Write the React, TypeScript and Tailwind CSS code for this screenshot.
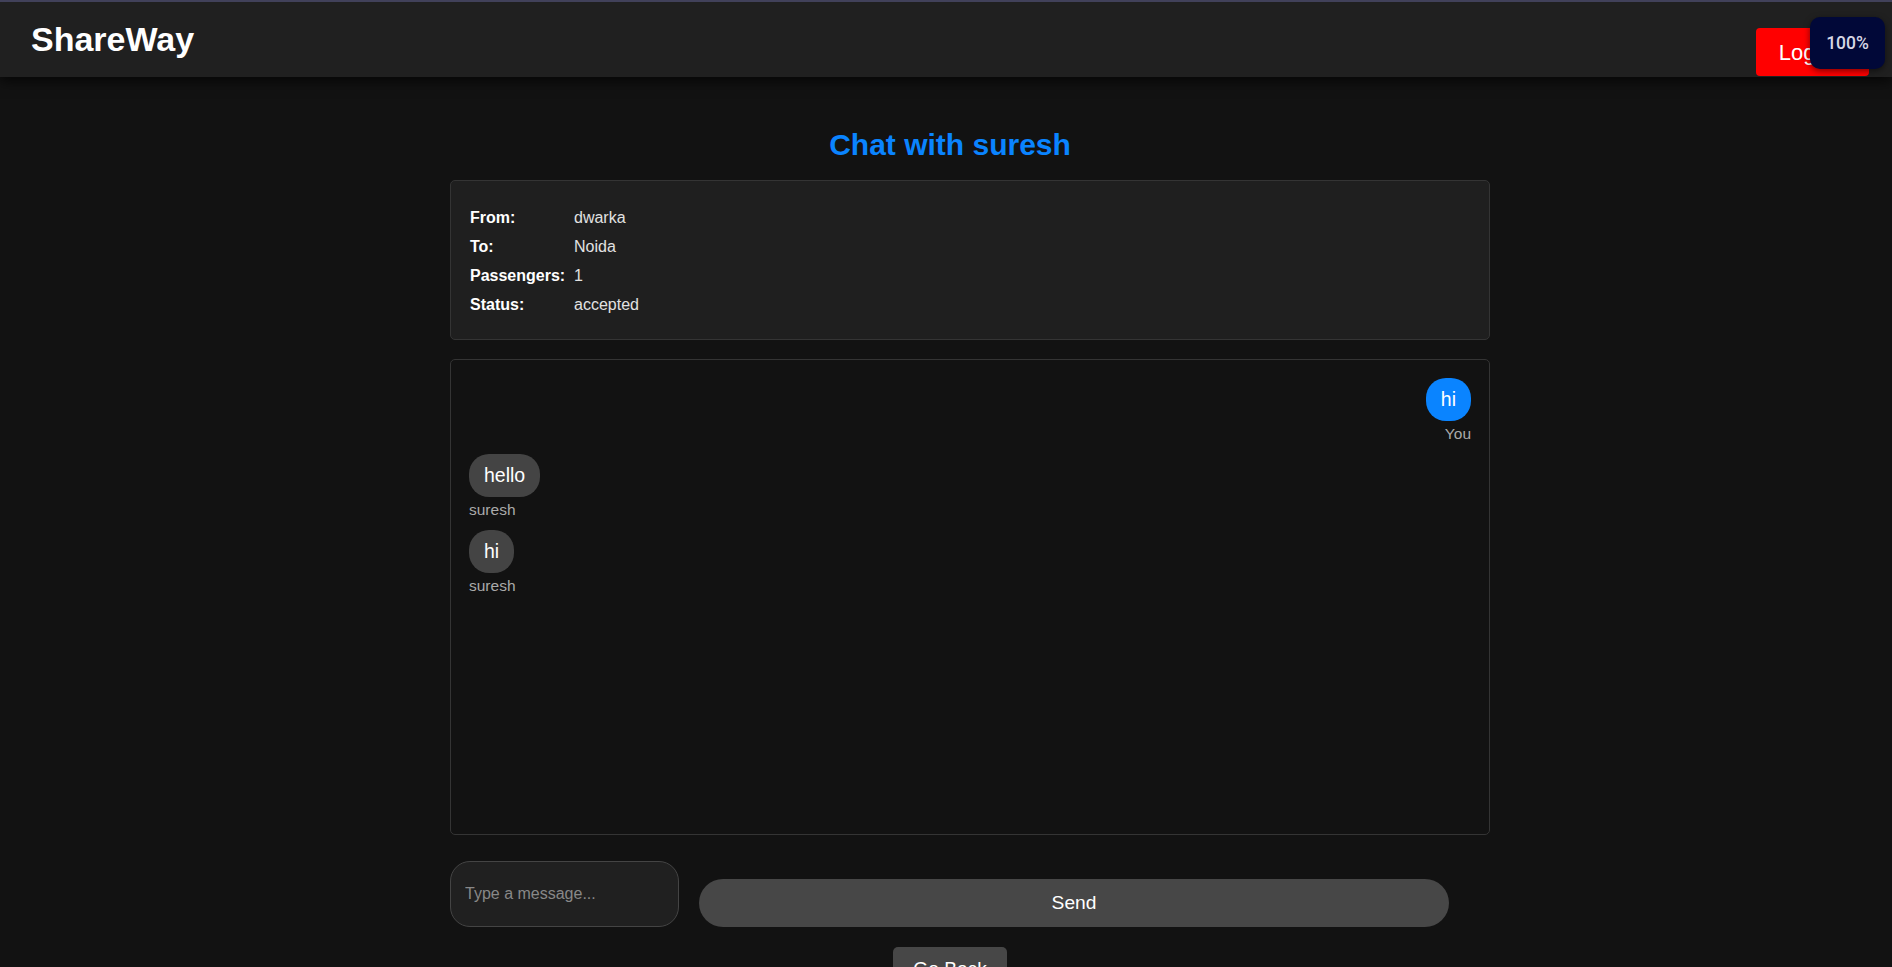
import React from "react";

const messages = [
  { text: "hi", sender: "You", mine: true },
  { text: "hello", sender: "suresh", mine: false },
  { text: "hi", sender: "suresh", mine: false },
];

const details = [
  { label: "From:", value: "dwarka" },
  { label: "To:", value: "Noida" },
  { label: "Passengers:", value: "1" },
  { label: "Status:", value: "accepted" },
];

function Header() {
  return (
    <div className="relative h-[77px] flex justify-between items-start bg-[#202020] border-t-2 border-[#41415a] shadow-[0_4px_12px_rgba(0,0,0,0.7)] z-10">
      <div className="pl-[31px] pt-[18px] text-[34px] leading-[38px] font-bold text-white">
        ShareWay
      </div>
      <button className="mt-[26px] mr-[23px] h-[48px] px-[23px] rounded-[4px] bg-[#ff0000] text-white text-[22px]">
        Logout
      </button>
      <div className="absolute right-[7px] top-[15px] w-[75px] h-[52px] rounded-[10px] bg-[#010838] shadow-[0_2px_6px_rgba(0,0,0,0.5)] flex items-center justify-center text-[17.5px] text-[#d6d6e4] font-medium font-['Roboto',sans-serif]">
        100%
      </div>
    </div>
  );
}

function App() {
  return (
    <div className="min-h-screen bg-[#121212] font-['Liberation_Sans',Arial,sans-serif] text-white overflow-hidden">
      <Header />

      <div className="w-[1008px] mx-auto pl-[8px] flex flex-col">
        <h2 className="mt-[51px] text-center text-[30px] leading-[33px] font-bold text-[#0a84ff]">
          Chat with suresh
        </h2>

        <div className="mt-[19px] w-[1040px] border border-[#343434] rounded-[5px] bg-[#1f1f1f] pl-[19px] pt-[22px] pb-[20px]">
          {details.map((d) => (
            <div key={d.label} className="grid grid-cols-[104px_1fr] h-[29px] items-center text-[16px]">
              <span className="font-bold text-white">{d.label}</span>
              <span className="text-[#e2e2e2]">{d.value}</span>
            </div>
          ))}
        </div>

        <div className="mt-[19px] w-[1040px] h-[476px] border border-[#343434] rounded-[5px] bg-[#121212] p-[18px] flex flex-col gap-[12px]">
          {messages.map((m, i) => (
            <div key={i} className={m.mine ? "flex flex-col items-end" : "flex flex-col items-start"}>
              <div
                className={
                  m.mine
                    ? "px-[15px] py-[10px] rounded-[20px] bg-[#0a84ff] text-white text-[19.5px] leading-[23px]"
                    : "px-[15px] py-[10px] rounded-[20px] bg-[#444444] text-white text-[19.5px] leading-[23px]"
                }
              >
                {m.text}
              </div>
              <div className="mt-[4px] text-[15.5px] leading-[17px] text-[#aaaaaa]">{m.sender}</div>
            </div>
          ))}
        </div>

        <div className="mt-[26px] flex items-end gap-[20px]">
          <input
            type="text"
            placeholder="Type a message..."
            className="w-[229px] h-[66px] shrink-0 px-[14px] rounded-[20px] border border-[#444] bg-[#202020] text-[16px] text-white placeholder:text-[#888] outline-none"
          />
          <button className="w-[750px] h-[48px] shrink-0 rounded-[24px] bg-[#474747] text-white text-[19.2px]">
            Send
          </button>
        </div>

        <div className="mt-[20px] flex justify-center">
          <button className="px-[20px] py-[10px] rounded-[5px] bg-[#474747] text-white text-[19.2px] leading-[23px]">
            Go Back
          </button>
        </div>
      </div>
    </div>
  );
}

export default App;
